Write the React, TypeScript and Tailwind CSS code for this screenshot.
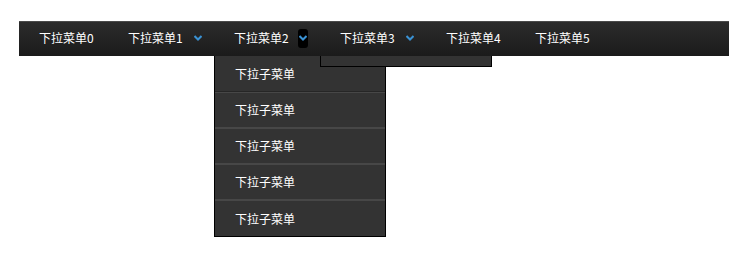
import React from "react";

const ITEMS = [
  { label: "下拉菜单0", arrow: false },
  { label: "下拉菜单1", arrow: true },
  { label: "下拉菜单2", arrow: true, open: true },
  { label: "下拉菜单3", arrow: true, empty: true },
  { label: "下拉菜单4", arrow: false },
  { label: "下拉菜单5", arrow: false },
];

const SUB = ["下拉子菜单", "下拉子菜单", "下拉子菜单", "下拉子菜单", "下拉子菜单"];

function Chevron() {
  return (
    <svg width="8" height="6" viewBox="0 0 8 6" className="block">
      <path d="M0.5 1 L4 4.5 L7.5 1" fill="none" stroke="#3a92d4" strokeWidth="2" />
    </svg>
  );
}

export default function App() {
  return (
    <div
      className="w-[748px] h-[253px] bg-white pt-[21px] pl-[19px]"
      style={{ fontFamily: '"Noto Sans CJK SC", "Noto Sans", sans-serif' }}
    >
      <ul className="flex w-[710px] h-[35px] border-t border-[#4a4a4a] bg-gradient-to-b from-[#2c2c2c] to-[#1b1b1b]">
        {ITEMS.map((it) => (
          <li
            key={it.label}
            className={`relative flex items-center pl-5 pb-[2px] text-[12px] text-white ${it.arrow ? "w-[106px]" : "w-[89px]"}`}
          >
            <span className="leading-none">{it.label}</span>
            {it.arrow &&
              (it.open ? (
                <span className="ml-[9px] flex h-[19px] w-[10px] items-center justify-center rounded-[3px] bg-black">
                  <Chevron />
                </span>
              ) : (
                <span className="ml-[11px]">
                  <Chevron />
                </span>
              ))}
            {it.open && (
              <ul className="absolute left-0 top-[34px] z-10 w-[172px] border border-t-0 border-black bg-[#333]">
                {SUB.map((s, i) => (
                  <li
                    key={i}
                    className={`flex h-[36px] items-center pl-5 text-[12px] text-white ${i > 0 ? "border-t border-[#474747]" : ""} ${i < SUB.length - 1 ? "border-b border-[#262626]" : ""}`}
                  >
                    {s}
                  </li>
                ))}
              </ul>
            )}
            {it.empty && (
              <div className="absolute left-0 top-[34px] z-10 h-[11px] w-[172px] border border-t-0 border-black bg-[#333]" />
            )}
          </li>
        ))}
      </ul>
    </div>
  );
}
